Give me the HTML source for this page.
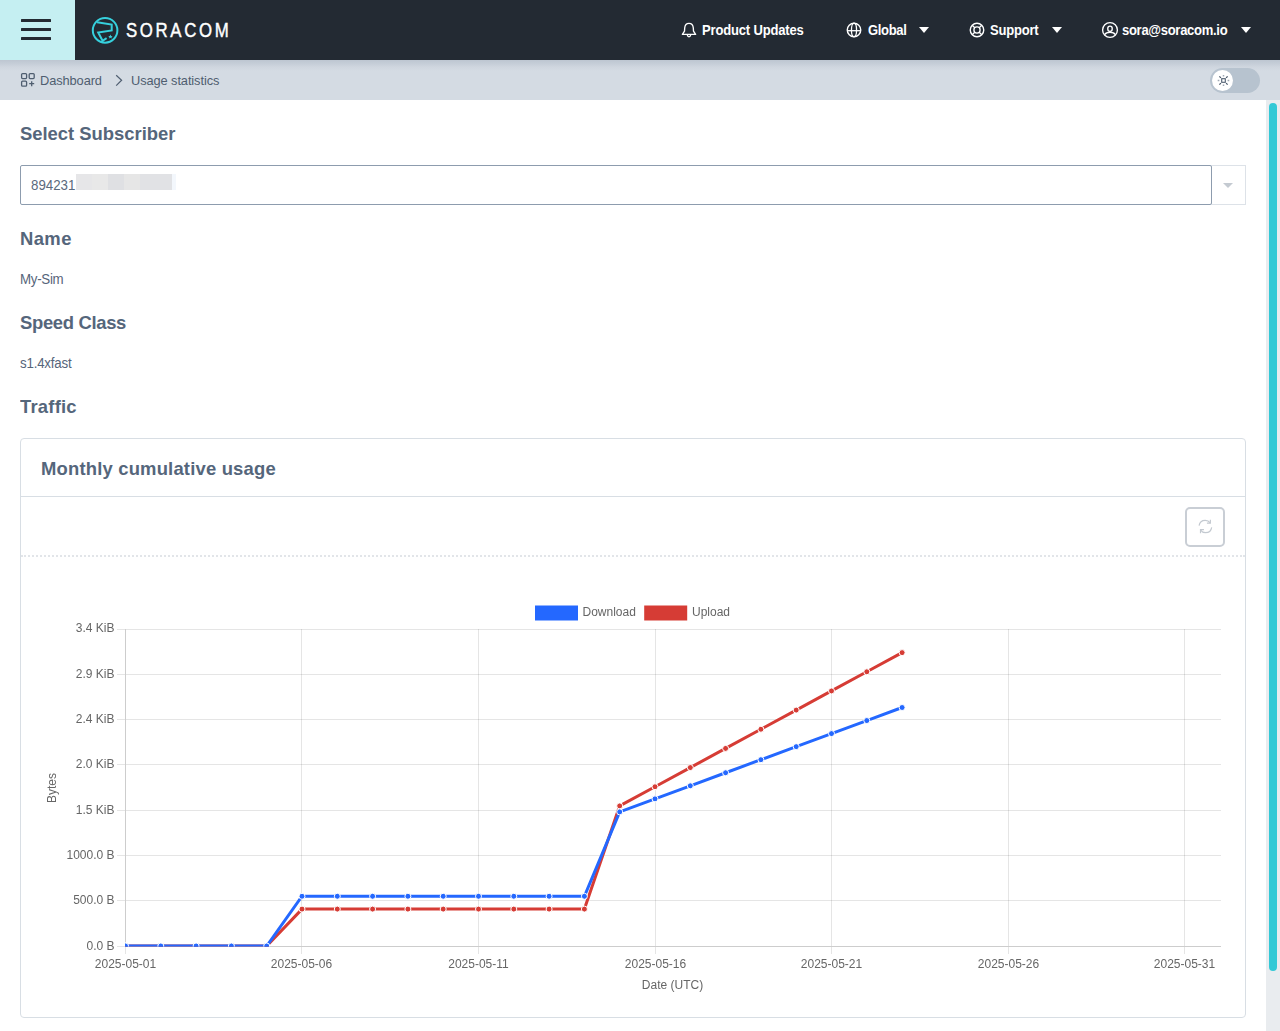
<!DOCTYPE html>
<html><head><meta charset="utf-8">
<style>
html,body{margin:0;padding:0;width:1280px;height:1031px;overflow:hidden;background:#fff;font-family:"Liberation Sans",sans-serif;}
.a{position:absolute;white-space:nowrap;line-height:1;}
#hdr{position:absolute;left:0;top:0;width:1280px;height:60px;background:#232a33;}
#burger{position:absolute;left:0;top:0;width:75px;height:60px;background:#c5eff2;}
#burger i{position:absolute;left:21px;width:30px;height:3px;background:#232a33;border-radius:0.5px;}
.nav{color:#fff;font-weight:700;font-size:14px;letter-spacing:-0.25px;top:23.1px;transform:scaleX(0.93);transform-origin:0 0;}
.caret{position:absolute;top:27px;width:0;height:0;border-left:5px solid transparent;border-right:5px solid transparent;border-top:6px solid #fff;}
#crumb{position:absolute;left:0;top:60px;width:1280px;height:40px;background:#d4dbe3;}
#crumb:before{content:"";position:absolute;left:0;top:0;right:0;height:11px;background:linear-gradient(#bdc6d1 0%,#c6ced8 35%,#cfd6df 65%,rgba(212,219,227,0) 100%);}
.bc{color:#4f5e70;font-size:13.5px;letter-spacing:-0.1px;top:73.8px;transform:scaleX(0.95);transform-origin:0 0;}
.h{color:#55667b;font-weight:700;font-size:19px;letter-spacing:0px;transform:scaleX(0.97);transform-origin:0 0;}
.t{color:#56657a;font-size:14px;letter-spacing:-0.2px;transform:scaleX(0.95);transform-origin:0 0;}
#scroll{position:absolute;left:1266px;top:100px;width:14px;height:931px;background:#e9ecef;}
#thumb{position:absolute;left:1269px;top:103px;width:8px;height:868px;background:#33c9d6;border-radius:4px;}
</style></head><body>
<div id="hdr">
  <div id="burger"><i style="top:19px"></i><i style="top:28px"></i><i style="top:37px"></i></div>
  <svg style="position:absolute;left:88px;top:13px" width="34" height="34" viewBox="0 0 34 34">
    <circle cx="17.1" cy="17.35" r="12.3" fill="none" stroke="#36d0dd" stroke-width="2"/>
    <path d="M9.1 9.2 L23.7 11.6 L23.7 17.4 L10.2 19.5 L14.6 27.8 L18.6 25.2" fill="none" stroke="#36d0dd" stroke-width="2" stroke-linejoin="miter"/>
    <path d="M22.4 21.4 l0.7 1.5 1.6 0.1 -1.2 1 0.4 1.6 -1.5 -0.9 -1.4 0.9 0.4 -1.6 -1.2 -1 1.6 -0.1z" fill="#36d0dd"/>
  </svg>
  <div class="a" style="left:125.5px;top:19.4px;color:#fff;font-size:21px;letter-spacing:3.3px;font-weight:400;-webkit-text-stroke:0.45px #fff;transform:scaleX(0.8);transform-origin:0 0;">SORACOM</div>

  <svg style="position:absolute;left:677px;top:18px" width="24" height="24" viewBox="0 0 24 24">
    <path d="M12 5.3C9.2 5.3 7.9 7.5 7.7 10L7.5 13.2 5.4 16.4H18.6L16.5 13.2 16.3 10C16.1 7.5 14.8 5.3 12 5.3Z" fill="none" stroke="#fff" stroke-width="1.35" stroke-linejoin="round"/>
    <path d="M10.3 16.9C10.5 18.1 11.1 18.8 12 18.8S13.5 18.1 13.7 16.9" fill="none" stroke="#fff" stroke-width="1.3"/>
  </svg>
  <div class="a nav" style="left:701.5px;letter-spacing:-0.18px">Product Updates</div>

  <svg style="position:absolute;left:842px;top:18px" width="24" height="24" viewBox="0 0 24 24">
    <circle cx="12" cy="11.95" r="6.75" fill="none" stroke="#fff" stroke-width="1.4"/>
    <ellipse cx="12" cy="11.95" rx="2.55" ry="6.75" fill="none" stroke="#fff" stroke-width="1.3"/>
    <path d="M5.3 12.7H18.7" stroke="#fff" stroke-width="1.3"/>
  </svg>
  <div class="a nav" style="left:867.5px;letter-spacing:-0.37px">Global</div>
  <div class="caret" style="left:919px"></div>

  <svg style="position:absolute;left:965px;top:18px" width="24" height="24" viewBox="0 0 24 24">
    <circle cx="12" cy="12" r="6.75" fill="none" stroke="#fff" stroke-width="1.4"/>
    <circle cx="12" cy="12" r="3.1" fill="none" stroke="#fff" stroke-width="1.35"/>
    <path d="M7.2 7.2L9.8 9.8M16.8 7.2L14.2 9.8M7.2 16.8L9.8 14.2M16.8 16.8L14.2 14.2" stroke="#fff" stroke-width="1.3"/>
  </svg>
  <div class="a nav" style="left:990px;letter-spacing:-0.23px">Support</div>
  <div class="caret" style="left:1052px"></div>

  <svg style="position:absolute;left:1098px;top:18px" width="24" height="24" viewBox="0 0 24 24">
    <circle cx="12" cy="11.95" r="7.4" fill="none" stroke="#fff" stroke-width="1.35"/>
    <ellipse cx="12" cy="10.8" rx="2.25" ry="2.65" fill="none" stroke="#fff" stroke-width="1.35"/>
    <path d="M6.6 16.6C7.6 15 9.6 14.2 12 14.2S16.4 15 17.4 16.6" fill="none" stroke="#fff" stroke-width="1.4"/>
  </svg>
  <div class="a nav" style="left:1122px;letter-spacing:-0.31px">sora@soracom.io</div>
  <div class="caret" style="left:1241px"></div>
</div>

<div id="crumb"></div>
<svg style="position:absolute;left:20px;top:72px" width="16" height="16" viewBox="0 0 16 16">
  <rect x="1.6" y="1.6" width="5" height="5" rx="1" fill="none" stroke="#4f5e70" stroke-width="1.3"/>
  <rect x="9.2" y="1.6" width="5" height="5" rx="1" fill="none" stroke="#4f5e70" stroke-width="1.3"/>
  <rect x="1.6" y="9.2" width="5" height="5" rx="1" fill="none" stroke="#4f5e70" stroke-width="1.3"/>
  <path d="M11.7 9.2v5M9.2 11.7h5" stroke="#4f5e70" stroke-width="1.3"/>
</svg>
<div class="a bc" style="left:39.7px">Dashboard</div>
<svg style="position:absolute;left:114px;top:74px" width="10" height="13" viewBox="0 0 10 13">
  <path d="M2.2 1.2L7.6 6.3 2.2 11.6" fill="none" stroke="#4f5e70" stroke-width="1.2"/>
</svg>
<div class="a bc" style="left:130.8px">Usage statistics</div>

<div style="position:absolute;left:1210px;top:68px;width:50px;height:25px;border-radius:12.5px;background:#b7c3cf;"></div>
<div style="position:absolute;left:1212px;top:70px;width:21px;height:21px;border-radius:50%;background:#fff;"></div>
<svg style="position:absolute;left:1215.6px;top:72.5px" width="15" height="15" viewBox="0 0 15 15">
  <rect x="5.7" y="5.7" width="3.6" height="3.6" fill="none" stroke="#4f5e70" stroke-width="1.1"/>
  <path d="M7.5 2v1.6M7.5 11.4v1.6M1.7 7.5h1.7M11.6 7.5h1.7" stroke="#9ea8b3" stroke-width="1.5"/>
  <path d="M3.4 3.4l1.5 1.5M10.1 10.1l1.5 1.5M3.4 11.6l1.5-1.5M10.1 4.9l1.5-1.5" stroke="#4a596b" stroke-width="1.3"/>
</svg>

<div id="scroll"></div>
<div id="thumb"></div>

<div class="a h" style="left:20px;top:123.6px;letter-spacing:-0.02px">Select Subscriber</div>
<div style="position:absolute;left:1211px;top:165px;width:33px;height:38px;border:1px solid #dde2e8;background:#fff;"></div>
<div style="position:absolute;left:20px;top:165px;width:1190px;height:38px;border:1px solid #8d9cae;border-radius:2px;background:#fff;"></div>
<div style="position:absolute;left:1223px;top:183px;width:0;height:0;border-left:5px solid transparent;border-right:5px solid transparent;border-top:5px solid #c4cad1;"></div>
<div class="a t" style="left:30.5px;top:177.9px;color:#5b6a7d;letter-spacing:0px">894231</div>
<div style="position:absolute;left:76px;top:174px;width:16px;height:16px;background:#e6e6e8"></div>
<div style="position:absolute;left:92px;top:174px;width:16px;height:16px;background:#e8e8e8"></div>
<div style="position:absolute;left:108px;top:174px;width:16px;height:16px;background:#dfe0e3"></div>
<div style="position:absolute;left:124px;top:174px;width:16px;height:16px;background:#e6e6e6"></div>
<div style="position:absolute;left:140px;top:174px;width:32px;height:16px;background:#e1e2e5"></div>
<div style="position:absolute;left:172px;top:174px;width:4px;height:16px;background:#f3f7fc"></div>

<div class="a h" style="left:20px;top:228.8px;letter-spacing:0.41px">Name</div>
<div class="a t" style="left:19.8px;top:272.1px;letter-spacing:-0.29px">My-Sim</div>
<div class="a h" style="left:20px;top:312.6px;letter-spacing:-0.34px">Speed Class</div>
<div class="a t" style="left:19.8px;top:356px;letter-spacing:-0.21px">s1.4xfast</div>
<div class="a h" style="left:20px;top:396.7px;letter-spacing:0.22px">Traffic</div>

<div style="position:absolute;left:20px;top:438px;width:1224px;height:578px;border:1px solid #d8dee4;border-radius:4px;background:#fff;"></div>
<div style="position:absolute;left:21px;top:496px;width:1224px;height:1px;background:#d8dee4;"></div>
<div style="position:absolute;left:21px;top:555px;width:1224px;height:0;border-top:2px dotted #e2e5e9;"></div>
<div class="a h" style="left:41px;top:458.8px;letter-spacing:0.19px">Monthly cumulative usage</div>
<div style="position:absolute;left:1185px;top:507px;width:36px;height:36px;border:2px solid #c9ced5;border-radius:5px;background:#fff;"></div>
<svg style="position:absolute;left:1195.6px;top:517.2px" width="19" height="19" viewBox="0 0 16 16">
  <path d="M2.6 7.3c0.4-2.7 2.6-4.5 5.2-4.5 1.8 0 3.2 0.8 4.1 2.1" fill="none" stroke="#c3c9d0" stroke-width="1"/>
  <path d="M12.1 2.3v2.9H9.2" fill="none" stroke="#c3c9d0" stroke-width="1"/>
  <path d="M13.2 8.7c-0.4 2.7-2.6 4.5-5.2 4.5-1.8 0-3.2-0.8-4.1-2.1" fill="none" stroke="#c3c9d0" stroke-width="1"/>
  <path d="M3.8 13.6v-2.9h2.9" fill="none" stroke="#c3c9d0" stroke-width="1"/>
</svg>

<svg class="chart" width="1280" height="1031" viewBox="0 0 1280 1031" style="position:absolute;left:0;top:0;pointer-events:none;will-change:transform">
<g shape-rendering="crispEdges"><rect x="117" y="629" width="1104" height="1" fill="#000" fill-opacity="0.1"/><rect x="117" y="674" width="1104" height="1" fill="#000" fill-opacity="0.1"/><rect x="117" y="719" width="1104" height="1" fill="#000" fill-opacity="0.1"/><rect x="117" y="764" width="1104" height="1" fill="#000" fill-opacity="0.1"/><rect x="117" y="810" width="1104" height="1" fill="#000" fill-opacity="0.1"/><rect x="117" y="855" width="1104" height="1" fill="#000" fill-opacity="0.1"/><rect x="117" y="900" width="1104" height="1" fill="#000" fill-opacity="0.1"/><rect x="301" y="629" width="1" height="325" fill="#000" fill-opacity="0.1"/><rect x="478" y="629" width="1" height="325" fill="#000" fill-opacity="0.1"/><rect x="655" y="629" width="1" height="325" fill="#000" fill-opacity="0.1"/><rect x="831" y="629" width="1" height="325" fill="#000" fill-opacity="0.1"/><rect x="1008" y="629" width="1" height="325" fill="#000" fill-opacity="0.1"/><rect x="1184" y="629" width="1" height="325" fill="#000" fill-opacity="0.1"/><rect x="125" y="629" width="1" height="317" fill="#cdcdcd"/><rect x="125" y="947" width="1" height="7" fill="#000" fill-opacity="0.1"/><rect x="125" y="946" width="1096" height="1" fill="#cdcdcd"/><rect x="117" y="946" width="8" height="1" fill="#000" fill-opacity="0.1"/></g>
<g font-family="Liberation Sans, sans-serif" font-size="12" fill="#666"><text x="114.5" y="632.2" text-anchor="end">3.4 KiB</text><text x="114.5" y="678" text-anchor="end">2.9 KiB</text><text x="114.5" y="723" text-anchor="end">2.4 KiB</text><text x="114.5" y="768" text-anchor="end">2.0 KiB</text><text x="114.5" y="814" text-anchor="end">1.5 KiB</text><text x="114.5" y="859" text-anchor="end">1000.0 B</text><text x="114.5" y="904" text-anchor="end">500.0 B</text><text x="114.5" y="950" text-anchor="end">0.0 B</text><text x="125.5" y="968" text-anchor="middle">2025-05-01</text><text x="301.5" y="968" text-anchor="middle">2025-05-06</text><text x="478.5" y="968" text-anchor="middle">2025-05-11</text><text x="655.5" y="968" text-anchor="middle">2025-05-16</text><text x="831.5" y="968" text-anchor="middle">2025-05-21</text><text x="1008.5" y="968" text-anchor="middle">2025-05-26</text><text x="1184.5" y="968" text-anchor="middle">2025-05-31</text>
<text x="672.5" y="989" text-anchor="middle">Date (UTC)</text>
<text transform="translate(56.3,788) rotate(-90)" text-anchor="middle">Bytes</text>
<text x="582.5" y="616">Download</text>
<text x="692" y="616">Upload</text>
</g>
<rect x="536" y="606.5" width="41" height="13" fill="#2468ff" stroke="#2468ff" stroke-width="2"/>
<rect x="645.2" y="606.5" width="41" height="13" fill="#d63c35" stroke="#d63c35" stroke-width="2"/>
<defs><clipPath id="cp"><rect x="125" y="620" width="1100" height="326.5"/></clipPath></defs>
<g clip-path="url(#cp)">
<polyline points="125.50,946.00 160.80,946.00 196.10,946.00 231.40,946.00 266.70,946.00 302.00,909.10 337.30,909.10 372.60,909.10 407.90,909.10 443.20,909.10 478.50,909.10 513.80,909.10 549.10,909.10 584.40,909.10 619.70,805.90 655.00,786.74 690.30,767.58 725.60,748.42 760.90,729.26 796.20,710.10 831.50,690.94 866.80,671.78 902.10,652.62" fill="none" stroke="#d63c35" stroke-width="3" stroke-linejoin="miter"/>
<circle cx="125.50" cy="946.00" r="3" fill="#d63c35" stroke="#fff" stroke-width="1"/><circle cx="160.80" cy="946.00" r="3" fill="#d63c35" stroke="#fff" stroke-width="1"/><circle cx="196.10" cy="946.00" r="3" fill="#d63c35" stroke="#fff" stroke-width="1"/><circle cx="231.40" cy="946.00" r="3" fill="#d63c35" stroke="#fff" stroke-width="1"/><circle cx="266.70" cy="946.00" r="3" fill="#d63c35" stroke="#fff" stroke-width="1"/><circle cx="302.00" cy="909.10" r="3" fill="#d63c35" stroke="#fff" stroke-width="1"/><circle cx="337.30" cy="909.10" r="3" fill="#d63c35" stroke="#fff" stroke-width="1"/><circle cx="372.60" cy="909.10" r="3" fill="#d63c35" stroke="#fff" stroke-width="1"/><circle cx="407.90" cy="909.10" r="3" fill="#d63c35" stroke="#fff" stroke-width="1"/><circle cx="443.20" cy="909.10" r="3" fill="#d63c35" stroke="#fff" stroke-width="1"/><circle cx="478.50" cy="909.10" r="3" fill="#d63c35" stroke="#fff" stroke-width="1"/><circle cx="513.80" cy="909.10" r="3" fill="#d63c35" stroke="#fff" stroke-width="1"/><circle cx="549.10" cy="909.10" r="3" fill="#d63c35" stroke="#fff" stroke-width="1"/><circle cx="584.40" cy="909.10" r="3" fill="#d63c35" stroke="#fff" stroke-width="1"/><circle cx="619.70" cy="805.90" r="3" fill="#d63c35" stroke="#fff" stroke-width="1"/><circle cx="655.00" cy="786.74" r="3" fill="#d63c35" stroke="#fff" stroke-width="1"/><circle cx="690.30" cy="767.58" r="3" fill="#d63c35" stroke="#fff" stroke-width="1"/><circle cx="725.60" cy="748.42" r="3" fill="#d63c35" stroke="#fff" stroke-width="1"/><circle cx="760.90" cy="729.26" r="3" fill="#d63c35" stroke="#fff" stroke-width="1"/><circle cx="796.20" cy="710.10" r="3" fill="#d63c35" stroke="#fff" stroke-width="1"/><circle cx="831.50" cy="690.94" r="3" fill="#d63c35" stroke="#fff" stroke-width="1"/><circle cx="866.80" cy="671.78" r="3" fill="#d63c35" stroke="#fff" stroke-width="1"/><circle cx="902.10" cy="652.62" r="3" fill="#d63c35" stroke="#fff" stroke-width="1"/>
<polyline points="125.50,946.00 160.80,946.00 196.10,946.00 231.40,946.00 266.70,946.00 302.00,896.25 337.30,896.25 372.60,896.25 407.90,896.25 443.20,896.25 478.50,896.25 513.80,896.25 549.10,896.25 584.40,896.25 619.70,811.90 655.00,798.85 690.30,785.80 725.60,772.75 760.90,759.70 796.20,746.65 831.50,733.60 866.80,720.55 902.10,707.50" fill="none" stroke="#2468ff" stroke-width="3" stroke-linejoin="miter"/>
<circle cx="125.50" cy="946.00" r="3" fill="#2468ff" stroke="#fff" stroke-width="1"/><circle cx="160.80" cy="946.00" r="3" fill="#2468ff" stroke="#fff" stroke-width="1"/><circle cx="196.10" cy="946.00" r="3" fill="#2468ff" stroke="#fff" stroke-width="1"/><circle cx="231.40" cy="946.00" r="3" fill="#2468ff" stroke="#fff" stroke-width="1"/><circle cx="266.70" cy="946.00" r="3" fill="#2468ff" stroke="#fff" stroke-width="1"/><circle cx="302.00" cy="896.25" r="3" fill="#2468ff" stroke="#fff" stroke-width="1"/><circle cx="337.30" cy="896.25" r="3" fill="#2468ff" stroke="#fff" stroke-width="1"/><circle cx="372.60" cy="896.25" r="3" fill="#2468ff" stroke="#fff" stroke-width="1"/><circle cx="407.90" cy="896.25" r="3" fill="#2468ff" stroke="#fff" stroke-width="1"/><circle cx="443.20" cy="896.25" r="3" fill="#2468ff" stroke="#fff" stroke-width="1"/><circle cx="478.50" cy="896.25" r="3" fill="#2468ff" stroke="#fff" stroke-width="1"/><circle cx="513.80" cy="896.25" r="3" fill="#2468ff" stroke="#fff" stroke-width="1"/><circle cx="549.10" cy="896.25" r="3" fill="#2468ff" stroke="#fff" stroke-width="1"/><circle cx="584.40" cy="896.25" r="3" fill="#2468ff" stroke="#fff" stroke-width="1"/><circle cx="619.70" cy="811.90" r="3" fill="#2468ff" stroke="#fff" stroke-width="1"/><circle cx="655.00" cy="798.85" r="3" fill="#2468ff" stroke="#fff" stroke-width="1"/><circle cx="690.30" cy="785.80" r="3" fill="#2468ff" stroke="#fff" stroke-width="1"/><circle cx="725.60" cy="772.75" r="3" fill="#2468ff" stroke="#fff" stroke-width="1"/><circle cx="760.90" cy="759.70" r="3" fill="#2468ff" stroke="#fff" stroke-width="1"/><circle cx="796.20" cy="746.65" r="3" fill="#2468ff" stroke="#fff" stroke-width="1"/><circle cx="831.50" cy="733.60" r="3" fill="#2468ff" stroke="#fff" stroke-width="1"/><circle cx="866.80" cy="720.55" r="3" fill="#2468ff" stroke="#fff" stroke-width="1"/><circle cx="902.10" cy="707.50" r="3" fill="#2468ff" stroke="#fff" stroke-width="1"/>
</g>
</svg>
</body></html>
